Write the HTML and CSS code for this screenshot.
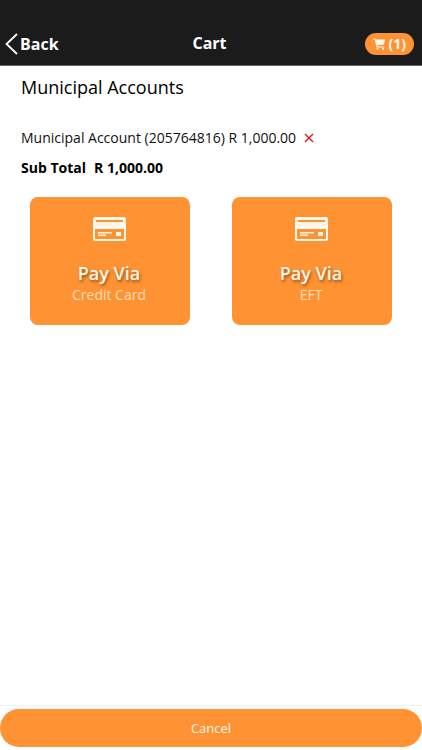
FILE: index.html
```html
<!DOCTYPE html>
<html lang="en">
<head>
<meta charset="utf-8">
<meta name="viewport" content="width=device-width, initial-scale=1">
<title>Cart</title>
<link rel="stylesheet" href="styles.css">
</head>
<body>
<header class="bar">
  <a class="back" href="#">
    <svg class="chevron" viewBox="0 0 13 22" aria-hidden="true"><path d="M12 1 1.500 11 12 21" fill="none" stroke="currentColor" stroke-width="1.800"/></svg>
    <span>Back</span>
  </a>
  <h1 class="title">Cart</h1>
  <button class="cart" type="button" aria-label="Cart, 1 item">
    <svg class="trolley" viewBox="0 0 12 12" aria-hidden="true"><path fill="currentColor" d="M0 .5h2.400l.4 1.100H12L11 6.600 4.300 7.500l.2.900h6.700v1H3.600L1.700 1.500H0z"/><circle cx="4.500" cy="10.700" r="1" fill="currentColor"/><circle cx="10" cy="10.700" r="1" fill="currentColor"/></svg>
    <span>(1)</span>
  </button>
</header>
<main class="content">
  <h2 class="heading">Municipal Accounts</h2>
  <div class="item">
    <span>Municipal Account (205764816) R 1,000.00</span>
    <button class="remove" type="button" aria-label="Remove">
      <svg viewBox="0 0 10 10" aria-hidden="true"><path d="M1 1 9 9M9 1 1 9" fill="none" stroke="currentColor" stroke-width="1.400"/></svg>
    </button>
  </div>
  <p class="total"><span>Sub Total</span><span>R 1,000.00</span></p>
  <div class="options">
    <button class="option" type="button">
      <svg class="card" viewBox="0 0 33 24" aria-hidden="true"><path fill="currentColor" fill-rule="evenodd" d="M2 0h29a2 2 0 0 1 2 2v20a2 2 0 0 1-2 2H2a2 2 0 0 1-2-2V2a2 2 0 0 1 2-2zM3 3v2h27V3zM2 12v10h29V12z"/><path fill="currentColor" d="M5 15h14v1.500H5zM5 17.500h8V19H5zM23 15h5v4h-5z"/></svg>
      <span class="via">Pay Via</span>
      <span class="method">Credit Card</span>
    </button>
    <button class="option" type="button">
      <svg class="card" viewBox="0 0 33 24" aria-hidden="true"><path fill="currentColor" fill-rule="evenodd" d="M2 0h29a2 2 0 0 1 2 2v20a2 2 0 0 1-2 2H2a2 2 0 0 1-2-2V2a2 2 0 0 1 2-2zM3 3v2h27V3zM2 12v10h29V12z"/><path fill="currentColor" d="M5 15h14v1.500H5zM5 17.500h8V19H5zM23 15h5v4h-5z"/></svg>
      <span class="via">Pay Via</span>
      <span class="method">EFT</span>
    </button>
  </div>
</main>
<footer class="footer">
  <button class="cancel" type="button">Cancel</button>
</footer>
</body>
</html>
```
FILE: styles.css
```css
* {
  box-sizing: border-box;
}

body {
  display: flex;
  flex-direction: column;
  min-height: 100vh;
  margin: 0;
  background: #fff;
  color: #111;
  font: 14px/20px "Open Sans", "Noto Sans", sans-serif;
}

button {
  border: 0;
  font: inherit;
  cursor: pointer;
}

svg {
  display: block;
}

.bar {
  display: grid;
  grid-template-columns: 1fr auto 1fr;
  align-items: center;
  padding: 32px 8px 10px 5px;
  border-bottom: 1px solid #666;
  background: #1b1b1b;
  color: #fff;
}

.back {
  display: flex;
  align-items: center;
  gap: 2px;
  color: inherit;
  font-size: 16px;
  font-weight: 700;
  text-decoration: none;
}

.chevron {
  width: 13px;
  height: 22px;
}

.title {
  margin: 0;
  font-size: 16px;
  line-height: 23px;
  font-weight: 700;
}

.cart {
  display: flex;
  align-items: center;
  justify-self: end;
  gap: 4px;
  padding: 1px 8px;
  border-radius: 12px;
  background: #ff9333;
  color: #fff7ea;
  font-size: 14px;
  font-weight: 700;
}

.trolley {
  width: 12px;
  height: 12px;
}

.content {
  flex: 1;
  padding: 8px 21px;
}

.heading {
  margin: 0 0 28px;
  color: #000;
  font-size: 18px;
  line-height: 26px;
  font-weight: 500;
}

.item {
  display: flex;
  align-items: center;
  gap: 8px;
  margin-bottom: 10px;
}

.remove {
  padding: 0;
  background: none;
  color: #e01818;
}

.remove svg {
  width: 10px;
  height: 10px;
}

.total {
  display: flex;
  gap: 8px;
  margin: 0 0 19px;
  color: #000;
  font-weight: 700;
}

.options {
  display: grid;
  grid-template-columns: 1fr 1fr;
  gap: 42px;
  padding: 0 9px;
}

.option {
  display: flex;
  flex-direction: column;
  align-items: center;
  padding: 20px 10px 20px 8px;
  border-radius: 8px;
  background: #ff9333;
  color: #fff7ea;
}

.card {
  width: 33px;
  height: 24px;
  margin: 0 0 20px;
}

.via {
  font-size: 18px;
  line-height: 24px;
  font-weight: 600;
  text-shadow: 1px 2px 3px rgba(80, 40, 0, 0.6);
}

.method {
  color: #ffdcb8;
}

.footer {
  padding: 3px 0;
  border-top: 1px solid #eef2f2;
}

.cancel {
  display: block;
  width: 100%;
  padding: 9px;
  border-radius: 20px;
  background: #ff9333;
  color: #fff7ea;
  font-size: 13px;
}
```
